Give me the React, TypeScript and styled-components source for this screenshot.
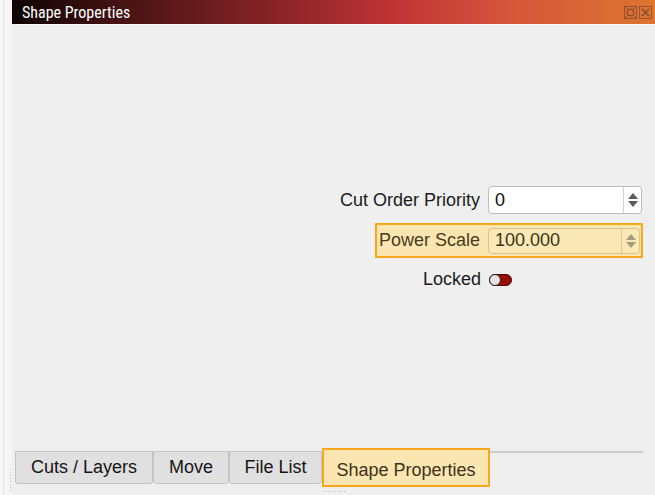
import React from "react";
import styled, { createGlobalStyle } from "styled-components";

const Global = createGlobalStyle`
  html, body { margin: 0; padding: 0; background: #efefef; }
  body { font-family: "Liberation Sans", Arial, sans-serif; }
  * { box-sizing: border-box; }
`;

const Window = styled.div`
  width: 655px;
  height: 495px;
  display: flex;
  background: #efefef;
  overflow: hidden;
`;

const SideStrip = styled.div`
  width: 12px;
  flex: none;
  background: #f4f4f4;
  border-left: 3px solid #f7f7f7;
  box-shadow: inset 1px 0 0 #e4e4e4;
  display: flex;
  flex-direction: column;
  justify-content: flex-end;
  align-items: flex-end;
  padding-bottom: 4px;
`;

const Grip = styled.div<{ $vertical?: boolean }>`
  ${(p) =>
    p.$vertical
      ? `width: 1px; height: 22px; margin-right: 1px;
         background: repeating-linear-gradient(to bottom, #b8b8b8 0 1px, transparent 1px 3px);`
      : `height: 1px; width: 22px;
         background: repeating-linear-gradient(to right, #b8b8b8 0 1px, transparent 1px 3px);`}
`;

const Main = styled.div`
  flex: 1;
  display: flex;
  flex-direction: column;
  min-width: 0;
`;

const TitleBar = styled.div`
  height: 25px;
  flex: none;
  display: flex;
  align-items: center;
  justify-content: space-between;
  padding: 0 3px 0 10px;
  background: linear-gradient(
    to right,
    #0e0303 0%,
    #4a1414 18%,
    #8a2428 42%,
    #c23436 60%,
    #d4573a 78%,
    #dd7630 100%
  );
  border-bottom: 1px solid #f6f6f6;
`;

const Title = styled.span`
  color: #ffffff;
  font-family: "Liberation Sans Narrow", "Roboto Condensed", Roboto, sans-serif;
  font-size: 16px;
  line-height: 1;
  padding-top: 1px;
`;

const TitleButtons = styled.div`
  display: flex;
  gap: 2px;
  opacity: 0.45;
`;

const Content = styled.div`
  flex: 1;
  display: flex;
  flex-direction: column;
  align-items: flex-end;
  padding: 161px 12px 0 0;
`;

const Row = styled.div<{ $highlight?: boolean }>`
  display: flex;
  align-items: center;
  justify-content: flex-end;
  gap: 8px;
  ${(p) =>
    p.$highlight
      ? `margin-top: 9px;
         height: 35px;
         background: #fbe6b2;
         border: 2px solid #f8a81e;
         padding: 0 1px 0 2px;`
      : `margin-right: 1px;`}
`;

const Label = styled.span<{ $highlight?: boolean }>`
  font-size: 18px;
  color: ${(p) => (p.$highlight ? "#4a3a1a" : "#1b1b1b")};
  white-space: nowrap;
`;

const SpinBox = styled.div<{ $highlight?: boolean }>`
  width: ${(p) => (p.$highlight ? "152px" : "154px")};
  height: ${(p) => (p.$highlight ? "26px" : "28px")};
  display: flex;
  background: ${(p) => (p.$highlight ? "#fae8b6" : "#ffffff")};
  border: 1px solid ${(p) => (p.$highlight ? "#d8c392" : "#bdbdbd")};
  border-radius: 4px;
  overflow: hidden;
`;

const SpinValue = styled.span<{ $highlight?: boolean }>`
  flex: 1;
  display: flex;
  align-items: center;
  padding-left: 6px;
  font-size: 18px;
  color: ${(p) => (p.$highlight ? "#3d3218" : "#111111")};
`;

const SpinArrows = styled.div<{ $highlight?: boolean }>`
  width: 18px;
  flex: none;
  border-left: 1px solid ${(p) => (p.$highlight ? "#dcc898" : "#d4d4d4")};
  display: flex;
  flex-direction: column;
  align-items: center;
  justify-content: center;
  gap: 2px;
`;

const Arrow = styled.span<{ $down?: boolean; $color: string }>`
  width: 0;
  height: 0;
  border-left: 5px solid transparent;
  border-right: 5px solid transparent;
  ${(p) =>
    p.$down
      ? `border-top: 6px solid ${p.$color};`
      : `border-bottom: 6px solid ${p.$color};`}
`;

const LockedRow = styled.div`
  margin-top: 11px;
  margin-right: 131px;
  display: flex;
  align-items: center;
  gap: 8px;
`;

const Toggle = styled.span`
  position: relative;
  width: 23px;
  height: 12px;
  border-radius: 6px;
  background: #9c0a0a;
  border: 1px solid #4a0a0a;
  display: inline-block;
`;

const Knob = styled.span`
  position: absolute;
  left: -1px;
  top: -1px;
  width: 12px;
  height: 12px;
  border-radius: 6px;
  background: #e8e2e2;
  border: 1.5px solid #222;
`;

const TabBar = styled.div`
  flex: none;
  height: 37px;
  display: flex;
  align-items: flex-start;
  padding: 0 0 0 3px;
`;

const Tab = styled.div<{ $active?: boolean }>`
  flex: none;
  display: flex;
  align-items: center;
  justify-content: center;
  font-size: 18px;
  ${(p) =>
    p.$active
      ? `height: 39px;
         width: 168px;
         margin-top: -2px;
         padding-top: 6px;
         background: #fbe6b2;
         border: 2px solid #f8a81e;
         color: #3d3218;`
      : `height: 33px;
         margin-top: 1px;
         background: #e0e0e0;
         border: 1px solid #c4c4c4;
         border-radius: 0 0 3px 3px;
         color: #151515;`}
`;

const TabLine = styled.div`
  flex: 1;
  margin: 1px 12px 0 0;
  height: 2px;
  background: #cacaca;
`;

const BottomGrip = styled.div`
  display: flex;
  padding-left: 311px;
  height: 8px;
  align-items: center;
`;

const TabArea = styled.div`
  display: flex;
  flex-direction: column;
`;

const FloatIcon = () => (
  <svg width="13" height="13" viewBox="0 0 14 14">
    <rect x="0.5" y="0.5" width="13" height="13" fill="none" stroke="#3a2a2a" />
    <circle cx="7" cy="7" r="3.5" fill="none" stroke="#3a2a2a" strokeWidth="1.5" />
    <path d="M1 1 L4 4 M13 1 L10 4 M1 13 L4 10 M13 13 L10 10" stroke="#3a2a2a" />
  </svg>
);

const CloseIcon = () => (
  <svg width="13" height="13" viewBox="0 0 14 14">
    <rect x="0.5" y="0.5" width="13" height="13" fill="none" stroke="#3a2a2a" />
    <path d="M3 3 L11 11 M11 3 L3 11" stroke="#3a2a2a" strokeWidth="2" />
  </svg>
);

const Spin = ({ value, highlight }: { value: string; highlight?: boolean }) => {
  const c = highlight ? "#a89a78" : "#5a5a5a";
  return (
    <SpinBox $highlight={highlight}>
      <SpinValue $highlight={highlight}>{value}</SpinValue>
      <SpinArrows $highlight={highlight}>
        <Arrow $color={c} />
        <Arrow $down $color={c} />
      </SpinArrows>
    </SpinBox>
  );
};

export default function App() {
  return (
    <>
      <Global />
      <Window>
        <SideStrip>
          <Grip $vertical />
        </SideStrip>
        <Main>
          <TitleBar>
            <Title>Shape Properties</Title>
            <TitleButtons>
              <FloatIcon />
              <CloseIcon />
            </TitleButtons>
          </TitleBar>
          <Content>
            <Row>
              <Label>Cut Order Priority</Label>
              <Spin value="0" />
            </Row>
            <Row $highlight>
              <Label $highlight>Power Scale</Label>
              <Spin value="100.000" highlight />
            </Row>
            <LockedRow>
              <Label>Locked</Label>
              <Toggle>
                <Knob />
              </Toggle>
            </LockedRow>
          </Content>
          <TabArea>
            <TabBar>
              <Tab style={{ width: 138 }}>Cuts / Layers</Tab>
              <Tab style={{ width: 76 }}>Move</Tab>
              <Tab style={{ width: 93 }}>File List</Tab>
              <Tab $active>Shape Properties</Tab>
              <TabLine />
            </TabBar>
          </TabArea>
          <BottomGrip>
            <Grip />
          </BottomGrip>
        </Main>
      </Window>
    </>
  );
}
